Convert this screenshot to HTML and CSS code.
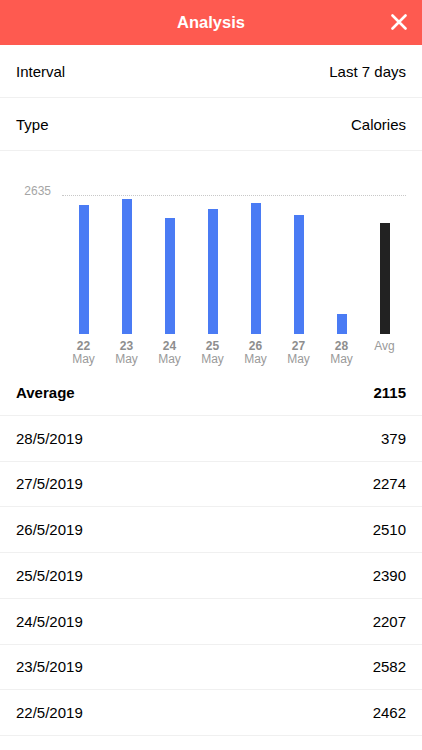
FILE: index.html
```html
<!DOCTYPE html>
<html>
<head>
    <title>Analysis</title>
    <link rel="stylesheet" href="styles.css">
</head>
<body>
    <div class="header">
        <span class="header-title">Analysis</span>
        <svg class="close" width="16" height="16" viewBox="0 0 16 16">
            <path d="M1.5 1.5 L14.5 14.5 M14.5 1.5 L1.5 14.5" stroke="#ffffff" stroke-width="2.6" stroke-linecap="round" fill="none"/>
        </svg>
    </div>

    <div class="option">
        <span>Interval</span>
        <span>Last 7 days</span>
    </div>
    <div class="option">
        <span>Type</span>
        <span>Calories</span>
    </div>

    <div class="chart">
        <div class="plot">
            <span class="max-label">2635</span>
            <div class="bars">
                <div class="col"><div class="bar" style="height: 93.4%"></div></div>
                <div class="col"><div class="bar" style="height: 98%"></div></div>
                <div class="col"><div class="bar" style="height: 83.8%"></div></div>
                <div class="col"><div class="bar" style="height: 90.7%"></div></div>
                <div class="col"><div class="bar" style="height: 95.3%"></div></div>
                <div class="col"><div class="bar" style="height: 86.3%"></div></div>
                <div class="col"><div class="bar" style="height: 14.4%"></div></div>
                <div class="col"><div class="bar avg" style="height: 80.3%"></div></div>
            </div>
        </div>
        <div class="labels">
            <div class="label"><b>22</b>May</div>
            <div class="label"><b>23</b>May</div>
            <div class="label"><b>24</b>May</div>
            <div class="label"><b>25</b>May</div>
            <div class="label"><b>26</b>May</div>
            <div class="label"><b>27</b>May</div>
            <div class="label"><b>28</b>May</div>
            <div class="label">Avg</div>
        </div>
    </div>

    <div class="row total">
        <span>Average</span>
        <span>2115</span>
    </div>
    <div class="row"><span>28/5/2019</span><span>379</span></div>
    <div class="row"><span>27/5/2019</span><span>2274</span></div>
    <div class="row"><span>26/5/2019</span><span>2510</span></div>
    <div class="row"><span>25/5/2019</span><span>2390</span></div>
    <div class="row"><span>24/5/2019</span><span>2207</span></div>
    <div class="row"><span>23/5/2019</span><span>2582</span></div>
    <div class="row"><span>22/5/2019</span><span>2462</span></div>
</body>
</html>
```

FILE: styles.css
```css
body {
    margin: 0;
    font-family: "Liberation Sans", Arial, sans-serif;
    background-color: #ffffff;
    color: #000000;
}
.header {
    height: 45px;
    background-color: #fe5a50;
    display: flex;
    align-items: center;
    justify-content: center;
    position: relative;
}
.header-title {
    color: #ffffff;
    font-size: 16.5px;
    font-weight: bold;
}
.close {
    position: absolute;
    right: 15px;
    top: 14px;
}
.option, .row {
    display: flex;
    justify-content: space-between;
    align-items: center;
    padding: 0 16px;
    font-size: 15px;
    box-sizing: border-box;
    border-bottom: 1px solid #f0f0f0;
}
.option {
    height: 53px;
}
.row {
    height: 45.75px;
}
.total {
    font-weight: bold;
}
.chart {
    height: 219px;
    box-sizing: border-box;
    padding: 44px 16px 0 62px;
}
.plot {
    height: 139px;
    border-top: 1px dotted #c8c8c8;
    box-sizing: border-box;
    position: relative;
}
.max-label {
    position: absolute;
    right: calc(100% + 11px);
    top: -12px;
    font-size: 12px;
    color: #a5a5a5;
}
.bars {
    height: 100%;
    display: grid;
    grid-template-columns: repeat(8, 43px);
}
.col {
    display: flex;
    align-items: flex-end;
    justify-content: center;
}
.bar {
    width: 10px;
    background-color: #4a7bf4;
}
.bar.avg {
    background-color: #222222;
}
.labels {
    display: grid;
    grid-template-columns: repeat(8, 43px);
    padding-top: 6px;
}
.label {
    display: flex;
    flex-direction: column;
    align-items: center;
    font-size: 12px;
    line-height: 13px;
    color: #9a9a9a;
}
.label b {
    color: #8e8e8e;
}
```
